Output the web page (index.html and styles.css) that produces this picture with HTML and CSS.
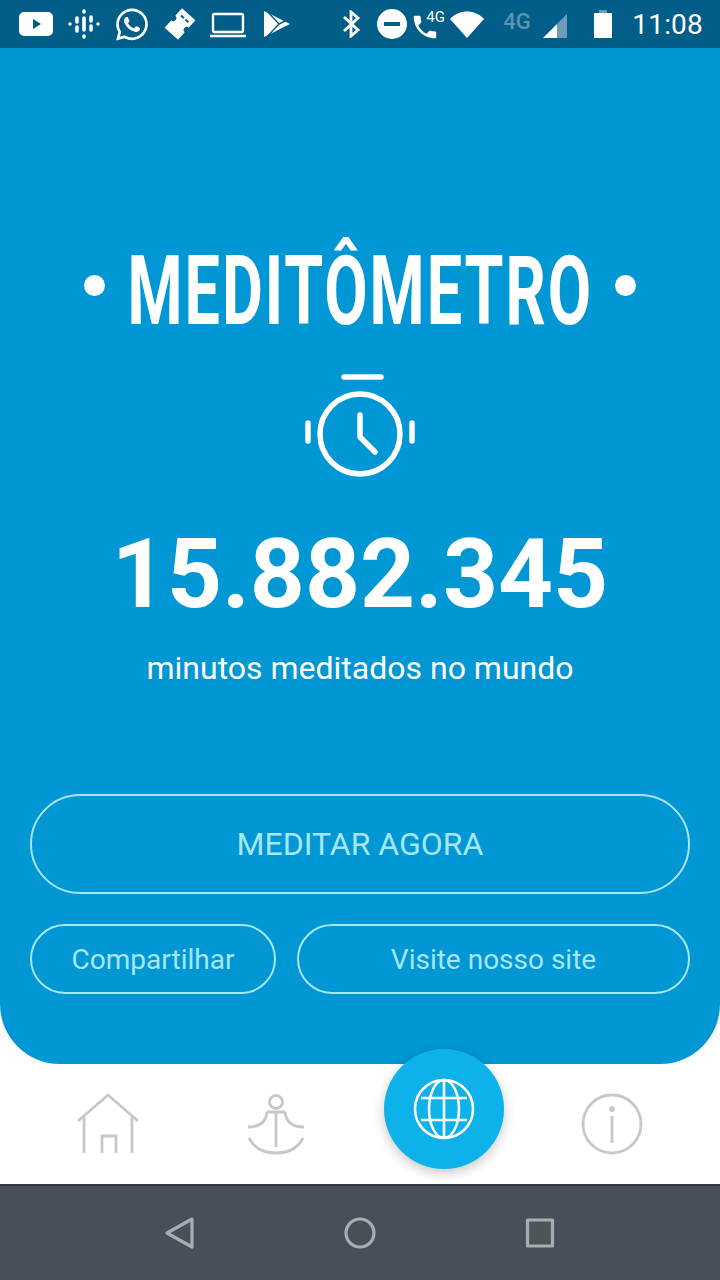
FILE: index.html
```html
<!DOCTYPE html>
<html lang="pt-BR">
<head>
    <meta charset="UTF-8">
    <meta name="viewport" content="width=device-width, initial-scale=1.0">
    <title>Meditômetro</title>
    <link rel="stylesheet" href="styles.css">
</head>
<body>

    <!-- Android status bar -->
    <div class="status-bar">
        <div class="status-left">
            <svg class="st-icon" viewBox="0 0 48 48"><path fill-rule="evenodd" d="M12 12h24a5 5 0 0 1 5 5v14a5 5 0 0 1-5 5H12a5 5 0 0 1-5-5V17a5 5 0 0 1 5-5zM21 19v10l8-5z" fill="#fff"/></svg>
            <svg class="st-icon" viewBox="0 0 48 48"><g stroke="#fff" stroke-width="3.6" stroke-linecap="round" fill="none"><path d="M10 24h.01M38 24h.01M17 18v4M17 27v4M24 11v1M24 18v12M24 36v1M31 17v4M31 26v4"/></g></svg>
            <svg class="st-icon" viewBox="0 0 48 48"><path transform="translate(8 8.5) scale(1.33)" fill="#fff" d="M17.472 14.382c-.297-.149-1.758-.867-2.03-.967-.273-.099-.471-.148-.67.15-.197.297-.767.966-.94 1.164-.173.199-.347.223-.644.075-.297-.15-1.255-.463-2.39-1.475-.883-.788-1.48-1.761-1.653-2.059-.173-.297-.018-.458.13-.606.134-.133.298-.347.446-.52.149-.174.198-.298.298-.497.099-.198.05-.371-.025-.52-.075-.149-.669-1.612-.916-2.207-.242-.579-.487-.5-.669-.51-.173-.008-.371-.01-.57-.01-.198 0-.52.074-.792.372-.272.297-1.04 1.016-1.04 2.479 0 1.462 1.065 2.875 1.213 3.074.149.198 2.096 3.2 5.077 4.487.709.306 1.262.489 1.694.625.712.227 1.36.195 1.871.118.571-.085 1.758-.719 2.006-1.413.248-.694.248-1.289.173-1.413-.074-.124-.272-.198-.57-.347m-5.421 7.403h-.004a9.87 9.87 0 01-5.031-1.378l-.361-.214-3.741.982.998-3.648-.235-.374a9.86 9.86 0 01-1.51-5.26c.001-5.45 4.436-9.884 9.888-9.884 2.64 0 5.122 1.03 6.988 2.898a9.825 9.825 0 012.893 6.994c-.003 5.45-4.437 9.884-9.885 9.884m8.413-18.297A11.815 11.815 0 0012.05 0C5.495 0 .16 5.335.157 11.892c0 2.096.547 4.142 1.588 5.945L.057 24l6.305-1.654a11.882 11.882 0 005.683 1.448h.005c6.554 0 11.89-5.335 11.893-11.893a11.821 11.821 0 00-3.48-8.413z"/></svg>
            <svg class="st-icon" viewBox="0 0 48 48"><g transform="rotate(42 24 24)"><path fill="#fff" d="M15 11h18v10a3 3 0 0 0 0 6v10H15V27a3 3 0 0 0 0-6z"/><path stroke="#005e89" stroke-width="2" d="M19 17h4M25 17h4"/></g></svg>
            <svg class="st-icon" viewBox="0 0 48 48"><rect x="9" y="14" width="30" height="18" rx="1.5" fill="none" stroke="#fff" stroke-width="2.4"/><path d="M6 36h36" stroke="#fff" stroke-width="2.6"/></svg>
            <svg class="st-icon" viewBox="0 0 48 48"><path fill="#fff" d="M12 11l26 13-26 13z"/><path fill="none" stroke="#005e89" stroke-width="1.4" d="M13 9l14 15-14 15M27 24l6-3"/></svg>
        </div>
        <div class="status-right">
            <svg class="st-bt" viewBox="0 0 20 28"><path d="M3 7l14 13-7 6V2l7 6L3 21" fill="none" stroke="#fff" stroke-width="2.8"/></svg>
            <svg class="st-dnd" viewBox="0 0 30 30"><path fill-rule="evenodd" fill="#fff" d="M15 0a15 15 0 1 1 0 30a15 15 0 0 1 0-30zM7 13v4h16v-4z"/></svg>
            <div class="st-call">
                <svg viewBox="0 0 24 24"><path fill="#fff" d="M6.62 10.79c1.44 2.83 3.76 5.14 6.59 6.59l2.2-2.2c.27-.27.67-.36 1.02-.24 1.12.37 2.33.57 3.57.57.55 0 1 .45 1 1V20c0 .55-.45 1-1 1-9.39 0-17-7.61-17-17 0-.55.45-1 1-1h3.5c.55 0 1 .45 1 1 0 1.25.2 2.45.57 3.57.11.35.03.74-.25 1.02l-2.2 2.2z"/></svg>
                <span class="st-call-label">4G</span>
            </div>
            <svg class="st-wifi" viewBox="0 0 34 27"><path fill="#fff" d="M0 8C9-2 25-2 34 8L17 27z"/></svg>
            <span class="st-net">4G</span>
            <svg class="st-signal" viewBox="0 0 24 24"><path fill="#fff" d="M0 24L14 10v14z"/><path fill="#6b9db8" d="M14 10L24 0v24H14z"/></svg>
            <svg class="st-battery" viewBox="0 0 18 28"><path fill="#6b9db8" d="M5 0h8v3H5z"/><path fill="#fff" d="M0 3h18v25H0z"/></svg>
            <span class="st-time">11:08</span>
        </div>
    </div>

    <!-- Main blue panel -->
    <main class="panel">
        <div class="logo-row">
            <span class="logo-dot"></span>
            <div class="logo-box"><span class="logo-text">MEDITÔMETRO</span></div>
            <span class="logo-dot"></span>
        </div>

        <svg class="clock" viewBox="0 0 112 106">
            <g fill="none" stroke="#fff" stroke-width="5.5" stroke-linecap="round" stroke-linejoin="round">
                <path d="M40 3h37M4 49v18M108 49v18M56 41v22l15 15"/>
                <circle cx="56" cy="60" r="40"/>
            </g>
        </svg>

        <div class="counter">15.882.345</div>
        <p class="counter-label">minutos meditados no mundo</p>

        <div class="actions">
            <button class="btn btn-big">MEDITAR AGORA</button>
            <div class="btn-row">
                <button class="btn btn-share">Compartilhar</button>
                <button class="btn btn-site">Visite nosso site</button>
            </div>
        </div>
    </main>

    <!-- Tab bar -->
    <nav class="tabs">
        <div class="tab">
            <svg class="tab-icon" viewBox="0 0 64 64"><path d="M2 29L32 3l30 26M8 25v36M56 25v36M26 61V44h14v17"/></svg>
        </div>
        <div class="tab">
            <svg class="tab-icon" viewBox="0 0 64 64"><circle cx="32" cy="10" r="6.5"/><path d="M32 20v35M23 20h18M23 20c-1 10-8 15-19 15M41 20c1 10 8 15 19 15M5 46c5 10 15 15 27 15s22-5 27-15"/></svg>
        </div>
        <div class="tab">
            <div class="fab">
                <svg class="globe" viewBox="0 0 64 64">
                    <circle cx="32" cy="32" r="29"/>
                    <ellipse cx="32" cy="32" rx="15" ry="29"/>
                    <path d="M32 3v58M9 21h46M9 43h46"/>
                </svg>
            </div>
        </div>
        <div class="tab">
            <svg class="tab-icon" viewBox="0 0 64 64"><circle cx="32" cy="32" r="29"/><path d="M32 24v27"/><circle class="info-dot" cx="32" cy="17" r="1.5"/></svg>
        </div>
    </nav>

    <!-- Android navigation bar -->
    <div class="sys-nav">
        <svg class="sys-icon" viewBox="0 0 36 36"><path d="M30 4L5 18l25 14z"/></svg>
        <svg class="sys-icon" viewBox="0 0 36 36"><circle cx="18" cy="18" r="14"/></svg>
        <svg class="sys-icon" viewBox="0 0 36 36"><rect class="sys-square" x="5.5" y="5" width="25" height="26"/></svg>
    </div>

</body>
</html>
```

FILE: styles.css
```css
* {
    box-sizing: border-box;
}
body {
    margin: 0;
    width: 720px;
    height: 1280px;
    overflow: hidden;
    font-family: Roboto, "Liberation Sans", sans-serif;
    background-color: #fff;
    display: flex;
    flex-direction: column;
}

/* status bar */
.status-bar {
    height: 48px;
    background-color: #005e89;
    display: flex;
    justify-content: space-between;
    align-items: center;
    padding-left: 12px;
    color: #fff;
}
.status-left {
    display: flex;
}
.st-icon {
    width: 48px;
    height: 48px;
}
.status-right {
    display: flex;
    align-items: center;
    padding-right: 17px;
}
.st-bt {
    width: 20px;
    height: 28px;
}
.st-dnd {
    width: 30px;
    height: 30px;
    margin-left: 16px;
}
.st-call {
    width: 32px;
    height: 40px;
    margin-left: 7px;
    position: relative;
}
.st-call svg {
    position: absolute;
    left: -4px;
    top: 8px;
    width: 30px;
    height: 30px;
}
.st-call-label {
    position: absolute;
    left: 12px;
    top: 4px;
    font-size: 15px;
}
.st-wifi {
    width: 34px;
    height: 27px;
    margin-left: 4px;
}
.st-net {
    width: 30px;
    margin-left: 19px;
    font-size: 22px;
    font-weight: 500;
    color: #5c94b3;
    align-self: flex-start;
    margin-top: 5px;
}
.st-signal {
    width: 24px;
    height: 24px;
    margin-left: 10px;
    margin-top: 4px;
}
.st-battery {
    width: 18px;
    height: 28px;
    margin-left: 27px;
}
.st-time {
    margin-left: 20px;
    font-size: 28px;
    letter-spacing: 0.2px;
}

/* main panel */
.panel {
    height: 1016px;
    background-color: #0097d4;
    border-radius: 0 0 60px 60px;
    color: #fff;
    display: flex;
    flex-direction: column;
    align-items: center;
    padding-top: 191px;
}
.logo-row {
    width: 552px;
    height: 104px;
    display: flex;
    align-items: center;
    justify-content: space-between;
}
.logo-dot {
    width: 21px;
    height: 21px;
    border-radius: 50%;
    background-color: #fff;
    margin-top: -12px;
}
.logo-box {
    width: 460px;
    height: 104px;
    display: flex;
    justify-content: center;
}
.logo-text {
    flex: none;
    font-size: 96px;
    font-weight: 700;
    line-height: 104px;
    letter-spacing: 3px;
    white-space: nowrap;
    transform: scaleX(0.655);
}
.clock {
    width: 112px;
    height: 106px;
    margin-top: 31px;
}
.counter {
    font-size: 96px;
    font-weight: 700;
    line-height: 96px;
    margin-top: 46px;
}
.counter-label {
    margin: 26px 0 0;
    font-size: 32px;
    line-height: 40px;
}

.actions {
    width: 660px;
    margin-top: 106px;
    display: flex;
    flex-direction: column;
    gap: 30px;
}
.btn {
    background: none;
    border: 2px solid #a6e6f5;
    color: #a6e6f5;
    font-family: Roboto, "Liberation Sans", sans-serif;
    padding: 0;
    cursor: pointer;
}
.btn-big {
    height: 100px;
    border-radius: 50px;
    font-size: 32px;
}
.btn-row {
    display: flex;
    gap: 21px;
}
.btn-share,
.btn-site {
    height: 70px;
    border-radius: 35px;
    font-size: 28px;
}
.btn-share {
    width: 246px;
}
.btn-site {
    flex: 1;
}

/* tab bar */
.tabs {
    height: 120px;
    padding: 0 24px;
    display: flex;
    background-color: #fff;
}
.tab {
    width: 168px;
    display: flex;
    justify-content: center;
    align-items: center;
}
.tab-icon {
    width: 64px;
    height: 64px;
    fill: none;
    stroke: #c8c8c8;
    stroke-width: 2.8;
}
.info-dot {
    fill: #c8c8c8;
}
.fab {
    width: 120px;
    height: 120px;
    margin-top: -30px;
    border-radius: 50%;
    background-color: #0db2ea;
    box-shadow: 0 4px 12px rgba(0, 0, 0, 0.22);
    display: flex;
    align-items: center;
    justify-content: center;
}
.globe {
    width: 64px;
    height: 64px;
    fill: none;
    stroke: #fff;
    stroke-width: 2.6;
}

/* system navigation */
.sys-nav {
    flex: 1;
    background-color: #484f58;
    border-top: 2px solid #33373e;
    display: flex;
    justify-content: center;
    align-items: center;
    gap: 144px;
}
.sys-icon {
    width: 36px;
    height: 36px;
    fill: none;
    stroke: #a7aeb2;
    stroke-width: 3.2;
    stroke-linejoin: round;
}
.sys-square {
    fill: #4c5659;
}
```
